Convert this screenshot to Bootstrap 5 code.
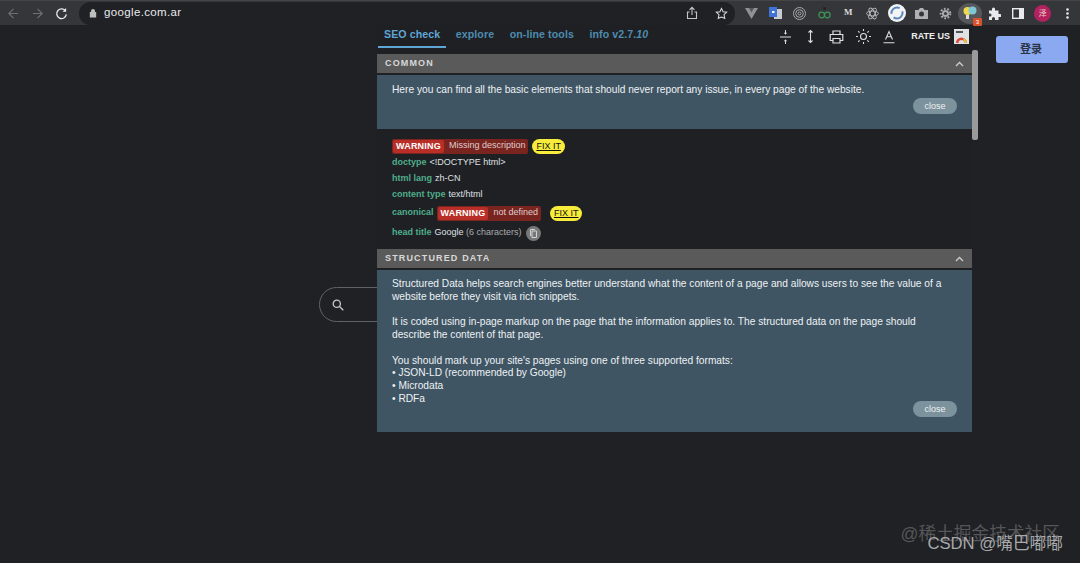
<!DOCTYPE html>
<html lang="en">
<head>
<meta charset="UTF-8">
<title>SEO check</title>
<link href="https://cdn.jsdelivr.net/npm/bootstrap@5.3.0/dist/css/bootstrap.min.css" rel="stylesheet">
<style>
html, body { height: 100%; }
body { background: #202124; font-family: "Liberation Sans", Arial, sans-serif; overflow: hidden; color: #e8eaed; width: 1080px; height: 563px; }
.browser-bar { height: 25px; background: #35363a; border-top: 1px solid #444; gap: 0; }
.nav-btns { width: 79px; padding-left: 7px; gap: 11px; }
.url-box { width: 656px; height: 23px; background: #202124; border-radius: 12px; padding-left: 10px; font-size: 11.5px; color: #e8eaed; letter-spacing: .35px; }
.url-box svg { margin-right: 7px; }
.url-tail { margin-left: auto; gap: 11px; padding-right: 1px; }
.url-tail svg { margin-right: 6px; }
.ext-bar { flex: 1; height: 23px; padding-left: 4px; }
.ext-slot { width: 24.3px; display: flex; justify-content: center; align-items: center; font-size: 9px; }
.ext-m { font-family: "Liberation Serif", serif; font-weight: 700; font-size: 9px; color: #ddd; }
.ext-active { height: 21px; border-radius: 50%; background: #55575b; }
.ext-badge { position: absolute; right: 0; bottom: -2px; background: #d9512c; color: #fff; font-size: 6px; line-height: 8px; width: 9px; text-align: center; border-radius: 1px; }
.avatar { width: 17px; height: 17px; background: #b3215f; border-radius: 50%; color: #ecc; font-size: 8px; }
.page-area { height: 538px; }
.search-stub { left: 319px; top: 262px; width: 100px; height: 35px; border: 1px solid #5f6368; border-radius: 18px; padding-left: 12px; }
.login-btn { left: 996px; top: 11px; width: 72px; height: 27px; background: #8aa9f0; border: 0; border-radius: 3px; font-size: 11px; color: #2a3446; font-weight: 700; padding: 0 2px 0 0; font-family: "Liberation Sans", "Noto Sans CJK SC", sans-serif; }
.seo-panel { left: 377px; top: 0; width: 595px; height: 407px; background: #1f2023; font-size: 9px; }
.seo-tabs { height: 23px; padding-left: 1px; }
.seo-tab { color: #4d8cb0; font-size: 10.6px; font-weight: 700; padding: 2px 6px 0; height: 23px; margin-right: 3.500px; letter-spacing: .1px; }
.seo-tab.active-tab { color: #5fa5d5; border-bottom: 2px solid #5fa5d5; }
.seo-tab em { font-weight: 700; }
.tool-icons { margin-left: auto; padding-right: 3px; height: 23px; }
.tool-icons svg { display: block; }
.tool-gap { margin-right: 12px; }
.rate-us { color: #eee; font-size: 9px; font-weight: 700; margin-left: 6px; }
.sec-head { height: 19px; margin-top: 6px; background: #5a5a5a; padding: 0 8px; font-size: 9px; font-weight: 700; letter-spacing: 1.15px; color: #d8d8d8; }
.sec-head svg { margin-left: auto; }
.sec-head.second { margin-top: 9px; }
.info-box { margin-top: 2px; background: #3f5564; padding: 9px 15px 0; font-size: 10.2px; line-height: 12.8px; color: #eef1f3; position: relative; }
.info-box p { margin: 0 0 12.7px; }
.box-one { height: 54px; }
.box-two { height: 162px; padding-top: 8px; }
.close-pill { position: absolute; right: 15px; bottom: 15px; width: 44px; height: 16px; padding: 0; background: #7c929c; color: #eef1f3; border: 0; border-radius: 8px; font-size: 9px; line-height: 16px; }
.seo-rows { padding: 9px 15px 0; height: 111px; }
.seo-line { display: flex; align-items: center; height: 16px; color: #dfe1e3; }
.seo-line.first-line { margin-bottom: 1px; }
.seo-line.canon-line { margin-top: 2px; }
.seo-key { color: #4fae8c; font-weight: 700; margin-right: 3px; }
.warn-wrap { background: #7a2420; color: #dcc; border-radius: 2px; height: 15px; padding-right: 3px; font-size: 9px; }
.warn-tag { background: #b92f28; color: #fff; font-weight: 700; font-size: 9px; letter-spacing: .2px; height: 13px; line-height: 13px; margin: 0 5px 0 1px; padding: 0 3px; border-radius: 2px; }
.fix-pill { background: #f7ec3b; color: #111; text-decoration: underline; border-radius: 8px; height: 15px; line-height: 15px; padding: 0 4px; margin-left: 4px; font-size: 9px; }
.fix-pill.wide-gap { margin-left: 9px; }
.muted-txt { color: #a9abad; }
.copy-dot { width: 15px; height: 15px; border-radius: 50%; background: #77787a; margin-left: 4px; }
.panel-thumb { left: 595px; top: 25px; width: 6px; height: 90px; background: #9a9a9a; border-radius: 2px; }
.wm-a { right: 20px; bottom: 15px; font-size: 17.7px; color: #55565a; font-family: "Liberation Sans", "Noto Sans CJK SC", sans-serif; white-space: nowrap; }
.wm-b { right: 17px; bottom: 7px; font-size: 16.7px; color: #a8a9ab; font-family: "Liberation Sans", "Noto Sans CJK SC", sans-serif; white-space: nowrap; }
</style>
</head>
<body>
<div class="browser-bar d-flex align-items-center">
  <div class="nav-btns d-flex align-items-center">
    <svg width="13" height="13" viewBox="0 0 14 14" fill="none" stroke="#6d6e70" stroke-width="1.3"><path d="M12 7H2M7 2 2 7l5 5"/></svg>
    <svg width="13" height="13" viewBox="0 0 14 14" fill="none" stroke="#6d6e70" stroke-width="1.3"><path d="M2 7h10M7 2l5 5-5 5"/></svg>
    <svg width="13" height="13" viewBox="0 0 14 14" fill="none" stroke="#e8eaed" stroke-width="1.4"><path d="M11.5 4.5A5.2 5.2 0 1 0 12.2 8"/><path d="M12 1.2v4H8z" fill="#e8eaed" stroke="none"/></svg>
  </div>
  <div class="url-box d-flex align-items-center">
    <svg width="8" height="10" viewBox="0 0 8 10"><path d="M2 4V3a2 2 0 0 1 4 0v1h1.2v5.5H.8V4z" fill="#bdbdbd"/></svg>
    <span>google.com.ar</span>
    <div class="url-tail d-flex align-items-center">
      <svg width="12" height="14" viewBox="0 0 12 14" fill="none" stroke="#c4c6c8" stroke-width="1.1"><path d="M6 9V1.500M3.500 3.800 6 1.300l2.500 2.500M3.500 6H1.500v6.500h9V6h-2"/></svg>
      <svg width="13" height="13" viewBox="0 0 14 14" fill="none" stroke="#d8dadc" stroke-width="1.1"><path d="m7 1.500 1.700 3.600 3.900.5-2.900 2.700.8 3.900L7 10.700l-3.500 1.500.8-3.900L1.400 5.600l3.900-.5z"/></svg>
    </div>
  </div>
  <div class="ext-bar d-flex align-items-center">
    <div class="ext-slot"><svg width="13" height="11" viewBox="0 0 13 11"><path d="M0 0h13L6.500 11z" fill="#8f9295"/><path d="M4 0h5L6.500 4.500z" fill="#55585b"/></svg></div>
    <div class="ext-slot"><svg width="13" height="13" viewBox="0 0 13 13"><rect x="5" y="2" width="8" height="10" fill="#c9ccd0"/><rect width="8" height="10" fill="#3f74d6"/><rect x="3" y="4" width="2.500" height="2" fill="#fff"/></svg></div>
    <div class="ext-slot"><svg width="13" height="13" viewBox="0 0 13 13" fill="none" stroke="#a5a7a9"><circle cx="6.500" cy="6.500" r="6"/><circle cx="6.500" cy="6.500" r="3.800"/><circle cx="6.500" cy="6.500" r="1.500"/></svg></div>
    <div class="ext-slot"><svg width="13" height="12" viewBox="0 0 13 12" fill="none"><circle cx="6.500" cy="1.500" r="1.400" fill="#222"/><circle cx="3.700" cy="8" r="2.800" stroke="#3a9a55" stroke-width="1.200"/><circle cx="9.300" cy="8" r="2.800" stroke="#3a9a55" stroke-width="1.200"/></svg></div>
    <div class="ext-slot ext-m">M</div>
    <div class="ext-slot"><svg width="13" height="13" viewBox="0 0 13 13" fill="none" stroke="#b9bbbd" stroke-width=".9"><ellipse cx="6.500" cy="6.500" rx="6" ry="2.400"/><ellipse cx="6.500" cy="6.500" rx="6" ry="2.400" transform="rotate(60 6.500 6.500)"/><ellipse cx="6.500" cy="6.500" rx="6" ry="2.400" transform="rotate(120 6.500 6.500)"/></svg></div>
    <div class="ext-slot"><svg width="18" height="18" viewBox="0 0 18 18"><circle cx="9" cy="9" r="9" fill="#f2f3f5"/><circle cx="9" cy="9" r="5.500" fill="none" stroke="#5b86bd" stroke-width="2" stroke-dasharray="12 4"/></svg></div>
    <div class="ext-slot"><svg width="13" height="11" viewBox="0 0 13 11"><path d="M0 2h3.500L5 0h3l1.500 2H13v9H0z" fill="#aeb0b2"/><circle cx="6.500" cy="6" r="2.500" fill="#35363a"/></svg></div>
    <div class="ext-slot"><svg width="13" height="13" viewBox="0 0 13 13" fill="none" stroke="#a8aaac"><circle cx="6.500" cy="6.500" r="2.500" stroke-width="2"/><circle cx="6.500" cy="6.500" r="4.800" stroke-width="2" stroke-dasharray="1.800 1.600"/></svg></div>
    <div class="ext-slot ext-active position-relative"><svg width="14" height="15" viewBox="0 0 14 15"><circle cx="4.500" cy="5" r="4" fill="#f0d84a"/><circle cx="9.500" cy="4.500" r="4" fill="#7fc6d6"/><rect x="3" y="9" width="3" height="4" fill="#ddd"/></svg><span class="ext-badge">3</span></div>
    <div class="ext-slot"><svg width="13" height="13" viewBox="0 0 13 13"><path d="M1 3.500h3V2a1.500 1.500 0 0 1 3 0v1.500h3.500V7H12a1.500 1.500 0 0 1 0 3h-1.500v3H7v-1.500a1.500 1.500 0 0 0-3 0V13H1V9.500h1a1.500 1.500 0 0 0 0-3H1z" fill="#e8eaed"/></svg></div>
    <div class="ext-slot"><svg width="12" height="11" viewBox="0 0 12 11"><rect x=".7" y=".7" width="10.600" height="9.600" fill="none" stroke="#e8eaed" stroke-width="1.400"/><rect x="7" y="1" width="4" height="9" fill="#e8eaed"/></svg></div>
    <div class="ext-slot"><span class="avatar d-flex align-items-center justify-content-center" style="font-family:'Noto Sans CJK SC',sans-serif">泽</span></div>
    <div class="ext-slot"><svg width="3" height="11" viewBox="0 0 3 11" fill="#e8eaed"><circle cx="1.500" cy="1.500" r="1.300"/><circle cx="1.500" cy="5.500" r="1.300"/><circle cx="1.500" cy="9.500" r="1.300"/></svg></div>
  </div>
</div>

<div class="page-area position-relative">
  <div class="search-stub position-absolute d-flex align-items-center">
    <svg width="12" height="12" viewBox="0 0 12 12" fill="none" stroke="#c5c7c9" stroke-width="1.300"><circle cx="4.800" cy="4.800" r="3.600"/><path d="m7.500 7.500 3.800 3.800"/></svg>
  </div>
  <button class="login-btn position-absolute" type="button">登录</button>

  <div class="seo-panel position-absolute">
    <div class="seo-tabs d-flex align-items-start">
      <div class="seo-tab active-tab">SEO check</div>
      <div class="seo-tab">explore</div>
      <div class="seo-tab">on-line tools</div>
      <div class="seo-tab">info v2.7.<em>10</em></div>
      <div class="tool-icons d-flex align-items-center">
        <svg class="tool-gap" width="13" height="16" viewBox="0 0 13 16" fill="#ddd" stroke="#ddd" stroke-width="1"><path d="M1 8h11" fill="none"/><path d="M6.500 1v4M6.500 11v4" fill="none"/><path d="m4.800 3.800 1.700 2 1.700-2zM4.800 12.200l1.700-2 1.700 2z" stroke="none"/></svg>
        <svg class="tool-gap" width="13" height="15" viewBox="0 0 13 15" fill="none" stroke="#ddd" stroke-width="1.100"><path d="M6.500 1.500v12M4.500 3.500l2-2 2 2M4.500 11.500l2 2 2-2"/></svg>
        <svg class="tool-gap" width="15" height="14" viewBox="0 0 15 14" fill="none" stroke="#ddd" stroke-width="1.200"><path d="M4 4V1h7v3M4 10.500H1.200V4.500h12.600v6H11"/><path d="M4 8.500h7v4.500H4z"/></svg>
        <svg class="tool-gap" width="15" height="15" viewBox="0 0 15 15" fill="none" stroke="#ddd" stroke-width="1.100"><circle cx="7.500" cy="7.500" r="3"/><path d="M7.500 0v2M7.500 13v2M0 7.500h2M13 7.500h2M2.200 2.200l1.400 1.400M11.400 11.400l1.400 1.400M2.200 12.800l1.400-1.400M11.400 3.600l1.400-1.400"/></svg>
        <svg width="12" height="14" viewBox="0 0 12 14" fill="none" stroke="#ddd" stroke-width="1.100"><path d="m2.500 9.500 3.500-8 3.500 8M3.800 6.800h4.400M.5 12.800h11"/></svg>
        <span class="rate-us ms-3 me-1">RATE US</span>
        <svg width="15" height="15" viewBox="0 0 15 15"><rect width="15" height="15" fill="#dfe1e3"/><rect x="2" y="2" width="7" height="2" fill="#555"/><path d="M2 14a5.500 5.500 0 0 1 11 0h-2.500a3 3 0 0 0-6 0z" fill="#d9483b"/><path d="M9 9a5.500 5.500 0 0 1 4 5h-2.500z" fill="#e8c23c"/></svg>
      </div>
    </div>

    <div class="sec-head d-flex align-items-center">COMMON
      <svg width="9" height="6" viewBox="0 0 9 6" fill="none" stroke="#cfcfcf" stroke-width="1.300"><path d="m1 5 3.500-3.500L8 5"/></svg>
    </div>
    <div class="info-box box-one">
      <p>Here you can find all the basic elements that should never report any issue, in every page of the website.</p>
      <button class="close-pill btn" type="button">close</button>
    </div>

    <div class="seo-rows">
      <div class="seo-line first-line">
        <span class="warn-wrap d-flex align-items-center"><span class="warn-tag">WARNING</span>Missing description</span>
        <span class="fix-pill">FIX IT</span>
      </div>
      <div class="seo-line"><span class="seo-key">doctype</span>&lt;!DOCTYPE html&gt;</div>
      <div class="seo-line"><span class="seo-key">html lang</span>zh-CN</div>
      <div class="seo-line"><span class="seo-key">content type</span>text/html</div>
      <div class="seo-line canon-line">
        <span class="seo-key">canonical</span>
        <span class="warn-wrap d-flex align-items-center"><span class="warn-tag">WARNING</span>not defined</span>
        <span class="fix-pill wide-gap">FIX IT</span>
      </div>
      <div class="seo-line mt-1"><span class="seo-key">head title</span>Google&nbsp;<span class="muted-txt">(6 characters)</span>
        <span class="copy-dot d-flex align-items-center justify-content-center"><svg width="7" height="9" viewBox="0 0 7 9" fill="none" stroke="#ddd" stroke-width=".9"><path d="M2 2h4.500v6.500H2zM.5 7V.5H5"/></svg></span>
      </div>
    </div>

    <div class="sec-head second d-flex align-items-center">STRUCTURED DATA
      <svg width="9" height="6" viewBox="0 0 9 6" fill="none" stroke="#cfcfcf" stroke-width="1.300"><path d="m1 5 3.500-3.500L8 5"/></svg>
    </div>
    <div class="info-box box-two">
      <p>Structured Data helps search engines better understand what the content of a page and allows users to see the value of a website before they visit via rich snippets.</p>
      <p>It is coded using in-page markup on the page that the information applies to. The structured data on the page should describe the content of that page.</p>
      <p>You should mark up your site's pages using one of three supported formats:<br>• JSON-LD (recommended by Google)<br>• Microdata<br>• RDFa</p>
      <button class="close-pill btn" type="button">close</button>
    </div>
    <div class="panel-thumb position-absolute"></div>
  </div>

  <div class="wm-a position-absolute">@稀土掘金技术社区</div>
  <div class="wm-b position-absolute">CSDN @嘴巴嘟嘟</div>
</div>
<script src="https://cdn.jsdelivr.net/npm/bootstrap@5.3.0/dist/js/bootstrap.bundle.min.js"></script>
</body>
</html>
